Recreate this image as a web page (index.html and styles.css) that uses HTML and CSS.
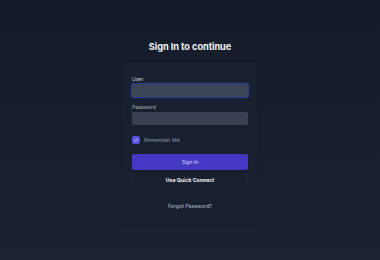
FILE: index.html
```html
<!DOCTYPE html>
<html lang="en">
<head>
<meta charset="utf-8">
<title>Sign In</title>
<link rel="stylesheet" href="styles.css">
</head>
<body>
<main class="page">
  <h1 class="title">Sign In to continue</h1>
  <form class="card">
    <label class="label">User</label>
    <div class="input input-focus"></div>
    <label class="label label-gap">Password</label>
    <div class="input"></div>
    <div class="remember">
      <span class="check">
        <svg viewBox="0 0 8 8" width="8" height="8"><path d="M2.3 4.1 L3.5 5.3 L5.8 2.7" fill="none" stroke="#e8e6ff" stroke-width="0.8" stroke-linecap="round" stroke-linejoin="round"/></svg>
      </span>
      <span class="remember-text">Remember Me</span>
    </div>
    <div class="btn btn-primary">Sign In</div>
    <div class="btn btn-quick">Use Quick Connect</div>
    <div class="forgot">Forgot Password?</div>
  </form>
</main>
</body>
</html>
```

FILE: styles.css
```css
html, body {
  margin: 0;
  padding: 0;
}
body {
  width: 380px;
  height: 260px;
  overflow: hidden;
  background: linear-gradient(180deg, #141a27 0%, #182030 60%, #1b2232 100%);
  font-family: Inter, "Noto Sans", sans-serif;
  color: #e5e7eb;
}
.page {
  display: flex;
  flex-direction: column;
  align-items: center;
  padding-top: 41px;
}
.title {
  margin: 0;
  font-size: 9.2px;
  line-height: 12px;
  font-weight: 700;
  color: #f3f4f6;
  letter-spacing: -0.05px;
}
.card {
  margin-top: 10px;
  width: 116px;
  padding: 13px 9px 17px;
  border-radius: 5px;
  background: linear-gradient(180deg, #19202f 0%, #182030 100%);
  box-shadow: 0 0 5px rgba(0, 0, 0, 0.08);
  display: flex;
  flex-direction: column;
}
.label {
  display: block;
  font-size: 5.2px;
  line-height: 7px;
  height: 7px;
  color: #c9ced8;
  margin-bottom: 1px;
}
.label-gap {
  margin-top: 7px;
  color: #a9afbb;
}
.input {
  height: 13px;
  border-radius: 2px;
  background: #394152;
}
.input-focus {
  background: #3c4458;
  box-shadow: 0 0 0 1px #30398a, 0 0 2px 1px rgba(60, 70, 170, 0.5);
}
.remember {
  margin-top: 11px;
  display: flex;
  align-items: center;
  gap: 4px;
  height: 8px;
}
.check {
  width: 8px;
  height: 8px;
  border-radius: 2px;
  background: #5b4fe0;
  display: flex;
}
.remember-text {
  font-size: 5.2px;
  color: #8c93a3;
}
.btn {
  height: 16px;
  display: flex;
  align-items: center;
  justify-content: center;
  font-size: 5.2px;
  border-radius: 2px;
}
.btn-primary {
  margin-top: 10px;
  background: #4539c4;
  color: #ddd9ff;
  box-shadow: 0 1px 2px rgba(0, 0, 0, 0.3);
}
.btn-quick {
  margin-top: 2px;
  color: #f3f4f6;
  font-weight: 700;
  border: 1px solid transparent;
  border-left-color: rgba(255, 255, 255, 0.035);
  border-right-color: rgba(255, 255, 255, 0.035);
  height: 14px;
}
.forgot {
  margin-top: 14px;
  text-align: center;
  font-size: 5.2px;
  line-height: 8px;
  color: #b9bfcb;
}
```
